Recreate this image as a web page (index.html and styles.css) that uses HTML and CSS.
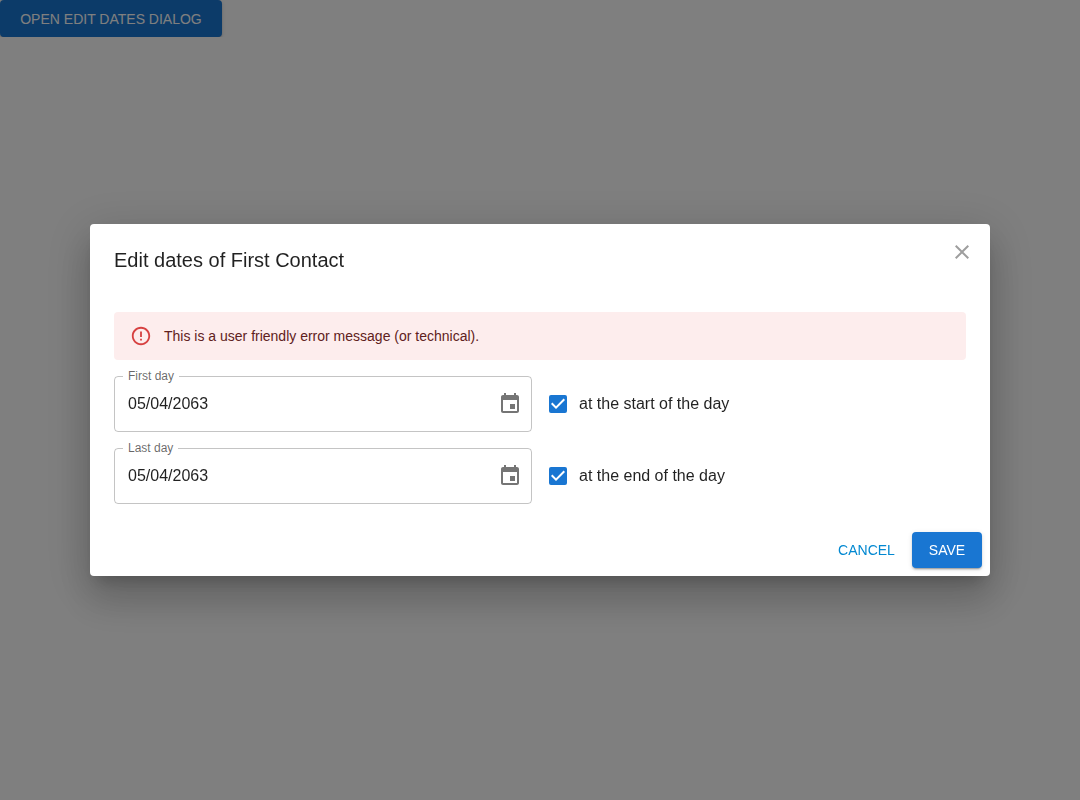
FILE: index.html
```html
<!DOCTYPE html>
<html lang="en">
<head>
<meta charset="utf-8">
<meta name="viewport" content="width=device-width, initial-scale=1">
<title>Edit dates</title>
<link rel="stylesheet" href="styles.css">
</head>
<body>
<button type="button" class="btn btn-contained btn-open">OPEN EDIT DATES DIALOG</button>

<div class="backdrop">
  <form class="dialog" role="dialog" aria-modal="true" aria-labelledby="dialog-title">
    <header class="dialog-header">
      <h2 class="dialog-title" id="dialog-title">Edit dates of First Contact</h2>
      <button type="button" class="icon-btn close" aria-label="Close">
        <svg class="icon" viewBox="0 0 24 24" aria-hidden="true"><path d="M19 6.41 17.59 5 12 10.59 6.41 5 5 6.41 10.59 12 5 17.59 6.41 19 12 13.41 17.59 19 19 17.59 13.41 12z"/></svg>
      </button>
    </header>

    <div class="dialog-content">
      <div class="alert" role="alert">
        <svg class="alert-icon" viewBox="0 0 24 24" aria-hidden="true"><path d="M11 15h2v2h-2zm0-8h2v6h-2zm.99-5C6.47 2 2 6.48 2 12s4.47 10 9.99 10C17.52 22 22 17.52 22 12S17.52 2 11.99 2zM12 20c-4.42 0-8-3.58-8-8s3.58-8 8-8 8 3.58 8 8-3.58 8-8 8z"/></svg>
        <span>This is a user friendly error message (or technical).</span>
      </div>

      <div class="row">
        <div class="field">
          <label class="field-label" for="first-day">First day</label>
          <input class="field-input" id="first-day" type="text" value="05/04/2063">
          <button type="button" class="icon-btn" aria-label="Choose first day">
            <svg class="icon" viewBox="0 0 24 24" aria-hidden="true"><path d="M17 12h-5v5h5v-5zM16 1v2H8V1H6v2H5c-1.11 0-1.99.9-1.99 2L3 19c0 1.1.89 2 2 2h14c1.1 0 2-.9 2-2V5c0-1.1-.9-2-2-2h-1V1h-2zm3 18H5V8h14v11z"/></svg>
          </button>
        </div>
        <div class="check">
          <span class="check-box">
            <input class="check-input" id="day-start" type="checkbox" checked>
            <svg class="check-mark" viewBox="3 3 18 18" aria-hidden="true"><path d="M10 17l-5-5 1.41-1.41L10 14.17l7.59-7.59L19 8z"/></svg>
          </span>
          <label for="day-start">at the start of the day</label>
        </div>
      </div>

      <div class="row">
        <div class="field">
          <label class="field-label" for="last-day">Last day</label>
          <input class="field-input" id="last-day" type="text" value="05/04/2063">
          <button type="button" class="icon-btn" aria-label="Choose last day">
            <svg class="icon" viewBox="0 0 24 24" aria-hidden="true"><path d="M17 12h-5v5h5v-5zM16 1v2H8V1H6v2H5c-1.11 0-1.99.9-1.99 2L3 19c0 1.1.89 2 2 2h14c1.1 0 2-.9 2-2V5c0-1.1-.9-2-2-2h-1V1h-2zm3 18H5V8h14v11z"/></svg>
          </button>
        </div>
        <div class="check">
          <span class="check-box">
            <input class="check-input" id="day-end" type="checkbox" checked>
            <svg class="check-mark" viewBox="3 3 18 18" aria-hidden="true"><path d="M10 17l-5-5 1.41-1.41L10 14.17l7.59-7.59L19 8z"/></svg>
          </span>
          <label for="day-end">at the end of the day</label>
        </div>
      </div>
    </div>

    <footer class="dialog-actions">
      <button type="button" class="btn btn-text">CANCEL</button>
      <button type="submit" class="btn btn-contained btn-save">SAVE</button>
    </footer>
  </form>
</div>
</body>
</html>
```
FILE: styles.css
```css
*,
*::before,
*::after {
  box-sizing: border-box;
}

body {
  margin: 0;
  background: #fff;
  color: rgba(0, 0, 0, 0.87);
  font-family: "Liberation Sans", Arial, sans-serif;
  font-size: 16px;
  line-height: 24px;
}

button,
input {
  margin: 0;
  font-family: inherit;
}

button {
  border: 0;
  cursor: pointer;
}

/* Buttons */
.btn {
  padding: 6px 8px;
  border-radius: 4px;
  background: transparent;
  font-size: 14px;
  line-height: 24px;
  text-align: center;
}

.btn-contained {
  background: #1976d2;
  color: #fff;
  box-shadow: 0 3px 1px -2px rgba(0, 0, 0, 0.2), 0 2px 2px 0 rgba(0, 0, 0, 0.14), 0 1px 5px 0 rgba(0, 0, 0, 0.12);
}

.btn-open {
  display: block;
  min-width: 222px;
  min-height: 37px;
}

.btn-save {
  min-width: 70px;
}

.btn-text {
  min-width: 75px;
  color: #0288d1;
}

.icon-btn {
  display: flex;
  flex: none;
  padding: 8px;
  border-radius: 50%;
  background: transparent;
  color: rgba(0, 0, 0, 0.54);
}

.icon {
  width: 24px;
  height: 24px;
  fill: currentColor;
}

/* Dialog */
.backdrop {
  position: fixed;
  inset: 0;
  display: flex;
  align-items: center;
  justify-content: center;
  padding: 32px;
  background: rgba(0, 0, 0, 0.5);
}

.dialog {
  width: 100%;
  max-width: 900px;
  border-radius: 4px;
  background: #fff;
  box-shadow: 0 11px 15px -7px rgba(0, 0, 0, 0.2), 0 24px 38px 3px rgba(0, 0, 0, 0.14), 0 9px 46px 8px rgba(0, 0, 0, 0.12);
}

.dialog-header {
  display: flex;
  align-items: flex-start;
  justify-content: space-between;
  padding: 8px 8px 20px 24px;
}

.dialog-title {
  margin: 0;
  padding-top: 12px;
  font-size: 20px;
  font-weight: 400;
  line-height: 32px;
}

.close {
  color: #9e9e9e;
}

.dialog-content {
  display: flex;
  flex-direction: column;
  gap: 16px;
  padding: 16px 24px 20px;
}

.dialog-actions {
  display: flex;
  justify-content: flex-end;
  gap: 8px;
  padding: 8px;
}

/* Alert */
.alert {
  display: flex;
  align-items: center;
  gap: 12px;
  padding: 12px 16px;
  border-radius: 4px;
  background: #fdeded;
  color: #5f2120;
  font-size: 14px;
}

.alert-icon {
  flex: none;
  width: 22px;
  height: 22px;
  fill: #d32f2f;
  opacity: 0.9;
}

/* Date rows */
.row {
  display: grid;
  grid-template-columns: 1fr 1fr;
  align-items: center;
  gap: 16px;
}

.field {
  position: relative;
  display: flex;
  align-items: center;
  padding: 7px 1px 7px 13px;
  border: 1px solid rgba(0, 0, 0, 0.23);
  border-radius: 4px;
}

.field-label {
  position: absolute;
  top: -9px;
  left: 8px;
  padding: 0 5px;
  background: #fff;
  color: rgba(0, 0, 0, 0.6);
  font-size: 12px;
  line-height: 16px;
}

.field-input {
  flex: 1;
  min-width: 0;
  padding: 0;
  border: 0;
  outline: 0;
  background: transparent;
  color: inherit;
  font-size: 16px;
  line-height: 24px;
}

.check {
  display: flex;
  align-items: center;
  gap: 12px;
  padding-left: 1px;
}

.check-box {
  display: grid;
}

.check-input,
.check-mark {
  grid-area: 1 / 1;
  width: 18px;
  height: 18px;
}

.check-input {
  appearance: none;
  border: 2px solid rgba(0, 0, 0, 0.6);
  border-radius: 2px;
}

.check-input:checked {
  border-color: #1976d2;
  background: #1976d2;
}

.check-mark {
  fill: #fff;
  pointer-events: none;
}
```
